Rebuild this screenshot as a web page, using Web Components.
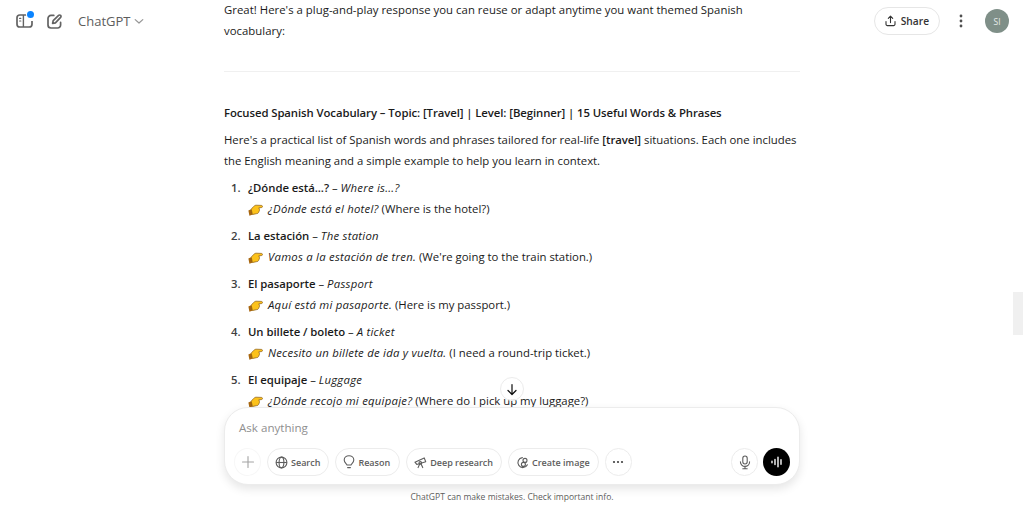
<!DOCTYPE html>
<html lang="en">
<head>
<meta charset="utf-8">
<title>ChatGPT</title>
<style>
  html, body { margin: 0; height: 100%; background: #fff; overflow: hidden; }
  body { font-family: "Open Sans", "Noto Sans", sans-serif; color: #1a1a1a; }
  chat-vocab i { letter-spacing: .24px; }
</style>
</head>
<body>
<template id="hand-tpl">
  <style>
    :host { display: inline-block; width: 15px; height: 12px; vertical-align: -3px; margin-right: 5px; }
    svg { display: block; }
  </style>
  <svg width="15" height="12" viewBox="0 0 15 12">
    <path d="M0.4 6.6 L3.6 5 L4.8 10.4 L1.4 11.7 Z" fill="#a8660f"/>
    <path d="M3.2 5.2 C4.8 3.2 6.2 1.6 7.8 1.2 L13.4 1.4 C14.8 1.5 14.8 3.5 13.4 3.6 L10.8 3.8 L11.4 5.2 C11.6 6.4 11.3 7.4 10.8 7.8 C10.5 9 9.8 9.6 8.8 9.6 L5 10.4 L4.4 10.4 Z" fill="#fcc21b" stroke="#8a5a10" stroke-width=".7" stroke-linejoin="round"/>
  </svg>
</template>

<template id="pill-tpl">
  <style>
    :host { display: inline-flex; align-items: center; gap: 3px; height: 28px; box-sizing: border-box; padding: 0 8px 0 7px; border: 1px solid #ececec; border-radius: 14px; font-size: 9px; font-weight: 600; color: #5d5d5d; background: #fff; white-space: nowrap; }
    :host([round]) { width: 27px; padding: 0; justify-content: center; gap: 0; }
    ::slotted(svg) { display: block; flex: none; }
  </style>
  <slot name="icon"></slot><slot></slot>
</template>

<script>
  class ChatHand extends HTMLElement {
    constructor() {
      super()
      this.attachShadow({ mode: 'open' })
      this.shadowRoot.appendChild(document.getElementById('hand-tpl').content.cloneNode(true))
    }
  }
  customElements.define('chat-hand', ChatHand)

  class ChatPill extends HTMLElement {
    constructor() {
      super()
      this.attachShadow({ mode: 'open' })
      this.shadowRoot.appendChild(document.getElementById('pill-tpl').content.cloneNode(true))
    }
  }
  customElements.define('chat-pill', ChatPill)

  class ChatTopbar extends HTMLElement {
    constructor() {
      super()
      this.attachShadow({ mode: 'open' })
      this.shadowRoot.innerHTML = `
        <style>
          :host { position: absolute; top: 0; left: 0; right: 0; height: 42px; display: flex; align-items: center; padding: 0 15px 0 16px; box-sizing: border-box; pointer-events: none; }
          .left { display: flex; align-items: center; }
          .panel { position: relative; width: 17px; height: 14px; margin-right: 14px; }
          .panel svg { display: block; }
          .panel i { position: absolute; top: -3px; right: -1px; width: 7px; height: 7px; border-radius: 50%; background: #0a84ff; box-shadow: 0 0 0 1px #fff; }
          .edit { margin-right: 16px; display: block; }
          .title { font-size: 13px; color: #5d5d5d; }
          .chev { margin-left: 4px; display: block; }
          .right { margin-left: auto; display: flex; align-items: center; }
          .share { display: flex; align-items: center; gap: 5px; height: 28px; box-sizing: border-box; padding: 0 10px; border: 1px solid #e6e6e6; border-radius: 14px; font-size: 10.2px; font-weight: 600; color: #333; background: #fff; }
          .dots { margin: 0 22px 0 19px; display: block; }
          .avatar { width: 24px; height: 24px; border-radius: 50%; background: #7f8f88; color: #e6ebe8; font-size: 8.5px; display: flex; align-items: center; justify-content: center; }
        </style>
        <div class="left">
          <div class="panel">
            <svg width="17" height="14" viewBox="0 0 17 14" fill="none" stroke="#636363" stroke-width="1.7">
              <path d="M11 1H3.8A2.8 2.8 0 0 0 1 3.8V10.2A2.8 2.8 0 0 0 3.8 13H13.2A2.8 2.8 0 0 0 16 10.2V7"/>
              <path d="M7.4 1V13" stroke-width="1.4"/>
              <path d="M3.6 4.4H4.8M3.6 7H4.8" stroke-linecap="round" stroke-width="1.2"/>
            </svg>
            <i></i>
          </div>
          <svg class="edit" width="15" height="15" viewBox="0 0 15 15" fill="none" stroke="#636363" stroke-width="1.7" stroke-linecap="round" stroke-linejoin="round">
            <path d="M6.8 1.4H4A3 3 0 0 0 1 4.4V11A3 3 0 0 0 4 14H10.6A3 3 0 0 0 13.6 11V8.4"/>
            <path d="M11.6 1.4a1.4 1.4 0 0 1 2 2L8.4 8.8 5.6 9.4 6.2 6.6Z"/>
          </svg>
          <span class="title">ChatGPT</span>
          <svg class="chev" width="10" height="10" viewBox="0 0 10 10" fill="none" stroke="#969696" stroke-width="1.2" stroke-linecap="round" stroke-linejoin="round"><path d="M1.2 3.6 5 7 8.8 3.6"/></svg>
        </div>
        <div class="right">
          <div class="share">
            <svg width="11" height="12" viewBox="0 0 11 12" fill="none" stroke="#333" stroke-width="1.1" stroke-linecap="round" stroke-linejoin="round"><path d="M5.5 7.6V1.4M3.3 3.4 5.5 1.2 7.7 3.4M1 6.6V9.2A1.4 1.4 0 0 0 2.4 10.6H8.6A1.4 1.4 0 0 0 10 9.2V6.6"/></svg>
            Share
          </div>
          <svg class="dots" width="4" height="14" viewBox="0 0 4 14" fill="#505050"><circle cx="2" cy="2" r="1.4"/><circle cx="2" cy="7" r="1.4"/><circle cx="2" cy="12" r="1.4"/></svg>
          <div class="avatar">SI</div>
        </div>
      `
    }
  }
  customElements.define('chat-topbar', ChatTopbar)

  class ChatVocab extends HTMLElement {
    constructor() {
      super()
      this.attachShadow({ mode: 'open' })
    }

    connectedCallback() {
      // attributes are only there once the parser has connected the element
      this.shadowRoot.innerHTML = `
        <style>
          :host { display: block; margin-bottom: 6px; position: relative; padding-left: 24px; font-size: 11.35px; line-height: 21px; }
          .num { position: absolute; left: 7px; top: 0; font-weight: 600; color: #404040; }
          b { font-weight: 600; letter-spacing: -.05px; }
          i { letter-spacing: .24px; }
        </style>
        <div class="num">${this.getAttribute('n')}.</div>
        <div><b>${this.getAttribute('term')}</b> – <i>${this.getAttribute('meaning')}</i></div>
        <div><chat-hand></chat-hand><slot></slot></div>
      `
    }
  }
  customElements.define('chat-vocab', ChatVocab)

  class ChatThread extends HTMLElement {
    constructor() {
      super()
      this.attachShadow({ mode: 'open' })
      this.shadowRoot.innerHTML = `
        <style>
          :host { display: block; flex: 1; min-height: 0; overflow: hidden; font-size: 11.35px; line-height: 21px; }
          .col { width: 576px; margin: -1px auto 0; }
          p { margin: 0; }
          .intro { letter-spacing: .03px; }
          hr { border: 0; border-top: 1px solid #f0f0f0; margin: 30px 0 30px; }
          h3 { margin: 0 0 6px; font-size: 11.35px; line-height: 21px; font-weight: 600; letter-spacing: -.08px; }
          b { font-weight: 600; letter-spacing: -.05px; }
          .list { margin-top: 6px; }
        </style>
        <div class="col">
          <p class="intro">Great! Here's a plug-and-play response you can reuse or adapt anytime you want themed Spanish<br>vocabulary:</p>
          <hr>
          <h3>Focused Spanish Vocabulary – Topic: [Travel] | Level: [Beginner] | 15 Useful Words &amp; Phrases</h3>
          <p>Here's a practical list of Spanish words and phrases tailored for real-life <b>[travel]</b> situations. Each one includes<br>the English meaning and a simple example to help you learn in context.</p>
          <div class="list"><slot></slot></div>
        </div>
      `
    }
  }
  customElements.define('chat-thread', ChatThread)

  class ChatComposer extends HTMLElement {
    constructor() {
      super()
      this.attachShadow({ mode: 'open' })
      this.shadowRoot.innerHTML = `
        <style>
          :host { display: block; flex: none; width: 576px; height: 78px; margin: 0 auto; box-sizing: border-box; border: 1px solid #ececec; border-radius: 24px; background: #fff; box-shadow: 0 4px 10px rgba(0,0,0,.1); padding: 11px 9px 8px 9px; position: relative; }
          .placeholder { font-size: 11.6px; line-height: 18px; color: #8f8f8f; padding-left: 5px; }
          .row { display: flex; align-items: center; gap: 6px; margin-top: 11px; }
          .end { margin-left: auto; display: flex; align-items: center; gap: 5px; }
          .voice { width: 27px; height: 28px; border-radius: 50%; background: #000; display: flex; align-items: center; justify-content: center; }
          .plus { width: 27px; height: 28px; box-sizing: border-box; border: 1px solid #f7f7f7; border-radius: 50%; display: flex; align-items: center; justify-content: center; }
        </style>
        <div class="placeholder">Ask anything</div>
        <div class="row">
          <div class="plus"><svg width="14" height="14" viewBox="0 0 14 14" stroke="#a3a3a3" stroke-width="1.1" stroke-linecap="round"><path d="M7 1.5V12.5M1.5 7H12.5"/></svg></div>
          <slot></slot>
          <div class="end">
            <slot name="mic"></slot>
            <div class="voice">
              <svg width="14" height="12" viewBox="0 0 14 12" stroke="#fff" stroke-width="1.4" stroke-linecap="round"><path d="M2 5.2V6.8M5 3.4V8.6M8 1.2V10.8M11 3.8V8.2"/></svg>
            </div>
          </div>
        </div>
      `
    }
  }
  customElements.define('chat-composer', ChatComposer)

  class ChatApp extends HTMLElement {
    constructor() {
      super()
      this.attachShadow({ mode: 'open' })
      this.shadowRoot.innerHTML = `
        <style>
          :host { display: flex; flex-direction: column; height: 100vh; position: relative; overflow: hidden; background: #fff; }
          .foot { flex: none; height: 24px; display: flex; align-items: center; justify-content: center; font-size: 8.55px; color: #5d5d5d; }
          .down { position: absolute; left: 500px; top: 377px; width: 24px; height: 24px; box-sizing: border-box; border: 1px solid #ececec; border-radius: 50%; background: rgba(255,255,255,.85); display: flex; align-items: center; justify-content: center; }
          .thumb { position: absolute; right: 1px; top: 292px; width: 10px; height: 43px; background: #f0f0f0; }
        </style>
        <slot name="top"></slot>
        <slot name="thread"></slot>
        <slot name="composer"></slot>
        <div class="foot">ChatGPT can make mistakes. Check important info.</div>
        <div class="down"><svg width="12" height="13" viewBox="0 0 12 13" fill="none" stroke="#0d0d0d" stroke-width="1.2" stroke-linecap="round" stroke-linejoin="round"><path d="M6 1.5V11.5M2 7.5 6 11.5 10 7.5"/></svg></div>
        <div class="thumb"></div>
      `
    }
  }
  customElements.define('chat-app', ChatApp)
</script>

<chat-app>
  <chat-topbar slot="top"></chat-topbar>
  <chat-thread slot="thread">
    <chat-vocab n="1" term="¿Dónde está...?" meaning="Where is...?"><i>¿Dónde está el hotel?</i> (Where is the hotel?)</chat-vocab>
    <chat-vocab n="2" term="La estación" meaning="The station"><i>Vamos a la estación de tren.</i> (We're going to the train station.)</chat-vocab>
    <chat-vocab n="3" term="El pasaporte" meaning="Passport"><i>Aquí está mi pasaporte.</i> (Here is my passport.)</chat-vocab>
    <chat-vocab n="4" term="Un billete / boleto" meaning="A ticket"><i>Necesito un billete de ida y vuelta.</i> (I need a round-trip ticket.)</chat-vocab>
    <chat-vocab n="5" term="El equipaje" meaning="Luggage"><i>¿Dónde recojo mi equipaje?</i> (Where do I pick up my luggage?)</chat-vocab>
  </chat-thread>
  <chat-composer slot="composer">
    <chat-pill>
      <svg slot="icon" width="13" height="13" viewBox="0 0 13 13" fill="none" stroke="#5d5d5d" stroke-width="1.1"><circle cx="6.5" cy="6.5" r="5.4"/><ellipse cx="6.5" cy="6.5" rx="2.4" ry="5.4"/><path d="M1.1 6.5H11.9"/></svg>
      Search
    </chat-pill>
    <chat-pill style="padding-right:9px">
      <svg slot="icon" width="12" height="14" viewBox="0 0 12 14" fill="none" stroke="#5d5d5d" stroke-width="1.1" stroke-linecap="round"><path d="M4 10C3.8 8.8 1.2 7.6 1.2 5A4.8 4.2 0 0 1 10.8 5C10.8 7.6 8.2 8.8 8 10Z"/><path d="M4.6 12.6H7.4"/></svg>
      Reason
    </chat-pill>
    <chat-pill>
      <svg slot="icon" width="13" height="13" viewBox="0 0 14 13" fill="none" stroke="#5d5d5d" stroke-width="1.2" stroke-linejoin="round" stroke-linecap="round"><path d="M1 6.2 11 1.6 12.6 5.6 3 8.6Z"/><circle cx="6.8" cy="7" r="1.4"/><path d="M6 8.4 4.4 12M7.6 8.2 9.4 12"/></svg>
      Deep research
    </chat-pill>
    <chat-pill>
      <svg slot="icon" width="13" height="13" viewBox="0 0 13 13" fill="none" stroke="#5d5d5d" stroke-width="1.1" stroke-linecap="round"><path d="M6.4 1.6A5 5 0 1 0 11.4 8.8"/><circle cx="9" cy="4.4" r="2"/><circle cx="7.4" cy="8.4" r="2"/></svg>
      Create image
    </chat-pill>
    <chat-pill round>
      <svg slot="icon" width="12" height="4" viewBox="0 0 12 4" fill="#404040"><circle cx="2" cy="2" r="1.1"/><circle cx="6" cy="2" r="1.1"/><circle cx="10" cy="2" r="1.1"/></svg>
    </chat-pill>
    <chat-pill round slot="mic">
      <svg slot="icon" width="12" height="15" viewBox="0 0 12 15" fill="none" stroke="#5d5d5d" stroke-width="1.1" stroke-linecap="round"><rect x="3.8" y="1" width="4.4" height="8" rx="2.2"/><path d="M1.4 6.8A4.6 4.6 0 0 0 10.6 6.8M6 11.4V13.6M3.8 13.8H8.2"/></svg>
    </chat-pill>
  </chat-composer>
</chat-app>
</body>
</html>
